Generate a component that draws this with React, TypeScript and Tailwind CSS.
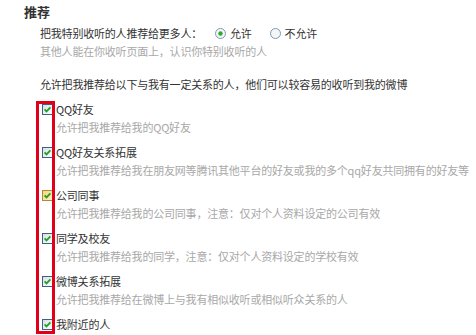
const items = [
  { title: 'QQ好友', desc: '允许把我推荐给我的QQ好友' },
  { title: 'QQ好友关系拓展', desc: '允许把我推荐给我在朋友网等腾讯其他平台的好友或我的多个qq好友共同拥有的好友等' },
  { title: '公司同事', desc: '允许把我推荐给我的公司同事，注意：仅对个人资料设定的公司有效', hover: true },
  { title: '同学及校友', desc: '允许把我推荐给我的同学，注意：仅对个人资料设定的学校有效' },
  { title: '微博关系拓展', desc: '允许把我推荐给在微博上与我有相似收听或相似听众关系的人' },
  { title: '我附近的人', desc: '' },
];

function CheckBox({ hover }: { hover?: boolean }) {
  return (
    <svg width="11" height="11" viewBox="0 0 11 11" className="shrink-0">
      <defs>
        <linearGradient id={hover ? 'cbh' : 'cb'} x1="0" y1="0" x2="1" y2="1">
          <stop offset="0" stopColor={hover ? '#f6d27a' : '#d8dde3'} />
          <stop offset="1" stopColor={hover ? '#fdf3c8' : '#ffffff'} />
        </linearGradient>
      </defs>
      <rect x="0.5" y="0.5" width="10" height="10" fill={`url(#${hover ? 'cbh' : 'cb'})`} stroke={hover ? '#b08a2e' : '#3d6184'} />
      <path d="M2.6 5.4 L4.5 7.4 L8.4 3.4" fill="none" stroke="#22a022" strokeWidth="1.8" />
    </svg>
  );
}

function Radio({ checked }: { checked?: boolean }) {
  return (
    <svg width="11" height="11" viewBox="0 0 11 11" className="shrink-0">
      <circle cx="5.5" cy="5.5" r="5" fill="#f4f6f8" stroke="#7e98b3" />
      {checked && <circle cx="5.5" cy="5.5" r="2.2" fill="#2fa82f" />}
    </svg>
  );
}

export default function App() {
  return (
    <div
      className="relative h-[335px] w-[476px] overflow-hidden bg-white pl-[24px] pt-[3px] text-[11px] tracking-[-0.2px] text-[#333]"
      style={{ fontFamily: '"Noto Sans CJK SC", "Noto Sans", sans-serif' }}
    >
      <div className="text-[13px] font-bold leading-[18px] tracking-normal">推荐</div>
      <div className="pl-[16px]">
        <div className="mt-[3px] flex h-[18px] items-center">
          <span>把我特别收听的人推荐给更多人：</span>
          <span className="ml-[13px] flex items-center gap-[4px]">
            <Radio checked />
            <span>允许</span>
          </span>
          <span className="ml-[18px] flex items-center gap-[4px]">
            <Radio />
            <span>不允许</span>
          </span>
        </div>
        <div className="leading-[18px] text-[#a8a8a8]">其他人能在你收听页面上，认识你特别收听的人</div>
        <div className="mt-[15px] leading-[18px]">允许把我推荐给以下与我有一定关系的人，他们可以较容易的收听到我的微博</div>
        <ul className="mt-[7px] pl-[2px]">
          {items.map((it) => (
            <li key={it.title} className="mb-[7px]">
              <div className="flex h-[18px] items-center gap-[3px]">
                <CheckBox hover={it.hover} />
                <span>{it.title}</span>
              </div>
              {it.desc && (
                <div className="pl-[14px] leading-[18px] whitespace-nowrap text-[#a8a8a8]">{it.desc}</div>
              )}
            </li>
          ))}
        </ul>
      </div>
      <div className="absolute left-[36px] top-[101px] h-[233px] w-[19px] border-[3px] border-[#e0001b]" />
    </div>
  );
}
